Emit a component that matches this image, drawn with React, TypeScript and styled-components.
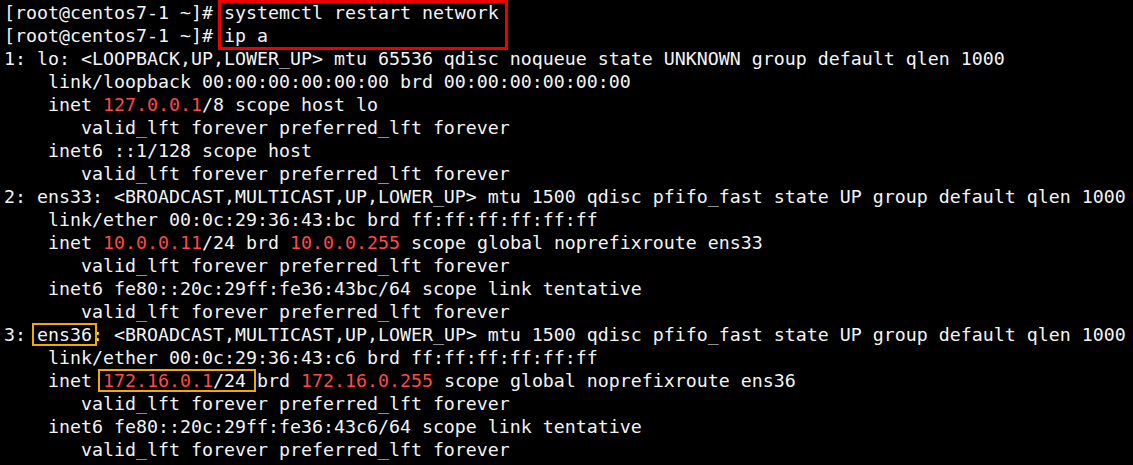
import React from "react";
import styled, { createGlobalStyle } from "styled-components";

const Global = createGlobalStyle`
  html, body {
    margin: 0;
    padding: 0;
    background: #000;
  }
  body {
    width: 1133px;
    height: 465px;
    overflow: hidden;
  }
`;

const Terminal = styled.div`
  box-sizing: border-box;
  width: 1133px;
  height: 465px;
  overflow: hidden;
  background: #000;
  color: #f4f4f4;
  font-family: "DejaVu Sans Mono", "Liberation Mono", monospace;
  font-size: 18.27px;
  line-height: 23px;
  padding: 1px 0 0 4px;
  white-space: pre;
`;

const Line = styled.div`
  height: 23px;
`;

const Ip = styled.span`
  color: #ff4848;
`;

const CommandGroup = styled.div`
  display: flex;
  flex-direction: row;
  align-items: flex-start;
`;

const PromptColumn = styled.div`
  display: flex;
  flex-direction: column;
  flex: none;
`;

const Commands = styled.div`
  position: relative;
  display: flex;
  flex-direction: column;
  flex: none;
  width: 275px;

  &::after {
    content: "";
    position: absolute;
    top: -1px;
    left: -6px;
    right: -9px;
    bottom: -3px;
    border: 3px solid #ee0000;
  }
`;

const Marked = styled.span<{ $l: number; $r: number; $t: number; $b: number }>`
  position: relative;

  &::after {
    content: "";
    position: absolute;
    top: ${(p) => p.$t}px;
    bottom: ${(p) => p.$b}px;
    left: ${(p) => p.$l}px;
    right: ${(p) => p.$r}px;
    border: 2.5px solid #f2aa00;
    pointer-events: none;
  }
`;

const PROMPT = "[root@centos7-1 ~]# ";

const Valid = () => <Line>{"       valid_lft forever preferred_lft forever"}</Line>;

export default function App() {
  return (
    <>
      <Global />
      <Terminal>
        <CommandGroup>
          <PromptColumn>
            <Line>{PROMPT}</Line>
            <Line>{PROMPT}</Line>
          </PromptColumn>
          <Commands>
            <Line>systemctl restart network</Line>
            <Line>ip a</Line>
          </Commands>
        </CommandGroup>
        <Line>{"1: lo: <LOOPBACK,UP,LOWER_UP> mtu 65536 qdisc noqueue state UNKNOWN group default qlen 1000"}</Line>
        <Line>{"    link/loopback 00:00:00:00:00:00 brd 00:00:00:00:00:00"}</Line>
        <Line>
          {"    inet "}
          <Ip>127.0.0.1</Ip>
          {"/8 scope host lo"}
        </Line>
        <Valid />
        <Line>{"    inet6 ::1/128 scope host "}</Line>
        <Valid />
        <Line>{"2: ens33: <BROADCAST,MULTICAST,UP,LOWER_UP> mtu 1500 qdisc pfifo_fast state UP group default qlen 1000"}</Line>
        <Line>{"    link/ether 00:0c:29:36:43:bc brd ff:ff:ff:ff:ff:ff"}</Line>
        <Line>
          {"    inet "}
          <Ip>10.0.0.11</Ip>
          {"/24 brd "}
          <Ip>10.0.0.255</Ip>
          {" scope global noprefixroute ens33"}
        </Line>
        <Valid />
        <Line>{"    inet6 fe80::20c:29ff:fe36:43bc/64 scope link tentative "}</Line>
        <Valid />
        <Line>
          {"3: "}
          <Marked $l={-5} $r={-5} $t={-1} $b={-1}>ens36</Marked>
          {": <BROADCAST,MULTICAST,UP,LOWER_UP> mtu 1500 qdisc pfifo_fast state UP group default qlen 1000"}
        </Line>
        <Line>{"    link/ether 00:0c:29:36:43:c6 brd ff:ff:ff:ff:ff:ff"}</Line>
        <Line>
          {"    inet "}
          <Marked $l={-5} $r={-10} $t={-1} $b={-1}>
            <Ip>172.16.0.1</Ip>
            {"/24"}
          </Marked>
          {" brd "}
          <Ip>172.16.0.255</Ip>
          {" scope global noprefixroute ens36"}
        </Line>
        <Valid />
        <Line>{"    inet6 fe80::20c:29ff:fe36:43c6/64 scope link tentative "}</Line>
        <Valid />
      </Terminal>
    </>
  );
}
